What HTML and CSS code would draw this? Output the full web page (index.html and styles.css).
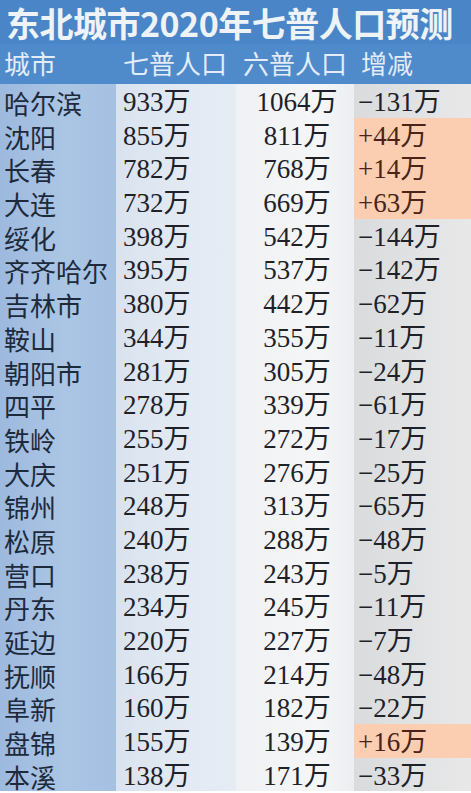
FILE: index.html
```html
<!DOCTYPE html>
<html lang="zh-CN">
<head>
<meta charset="utf-8">
<link rel="stylesheet" href="styles.css">
</head>
<body>
<div class="sheet">
  <div class="title">东北城市2020年七普人口预测</div>
  <div class="row head">
    <div class="c city">城市</div>
    <div class="c">七普人口</div>
    <div class="c">六普人口</div>
    <div class="c">增减</div>
  </div>
  <div class="body">
    <div class="col col-city">
      <div class="cell">哈尔滨</div><div class="cell">沈阳</div><div class="cell">长春</div><div class="cell">大连</div><div class="cell">绥化</div><div class="cell">齐齐哈尔</div><div class="cell">吉林市</div><div class="cell">鞍山</div><div class="cell">朝阳市</div><div class="cell">四平</div><div class="cell">铁岭</div><div class="cell">大庆</div><div class="cell">锦州</div><div class="cell">松原</div><div class="cell">营口</div><div class="cell">丹东</div><div class="cell">延边</div><div class="cell">抚顺</div><div class="cell">阜新</div><div class="cell">盘锦</div><div class="cell">本溪</div>
    </div>
    <div class="col col-7 num">
      <div class="cell">933万</div><div class="cell">855万</div><div class="cell">782万</div><div class="cell">732万</div><div class="cell">398万</div><div class="cell">395万</div><div class="cell">380万</div><div class="cell">344万</div><div class="cell">281万</div><div class="cell">278万</div><div class="cell">255万</div><div class="cell">251万</div><div class="cell">248万</div><div class="cell">240万</div><div class="cell">238万</div><div class="cell">234万</div><div class="cell">220万</div><div class="cell">166万</div><div class="cell">160万</div><div class="cell">155万</div><div class="cell">138万</div>
    </div>
    <div class="col col-6 num">
      <div class="cell">1064万</div><div class="cell">811万</div><div class="cell">768万</div><div class="cell">669万</div><div class="cell">542万</div><div class="cell">537万</div><div class="cell">442万</div><div class="cell">355万</div><div class="cell">305万</div><div class="cell">339万</div><div class="cell">272万</div><div class="cell">276万</div><div class="cell">313万</div><div class="cell">288万</div><div class="cell">243万</div><div class="cell">245万</div><div class="cell">227万</div><div class="cell">214万</div><div class="cell">182万</div><div class="cell">139万</div><div class="cell">171万</div>
    </div>
    <div class="col col-d num">
      <div class="cell">−131万</div><div class="cell up">+44万</div><div class="cell up">+14万</div><div class="cell up">+63万</div><div class="cell">−144万</div><div class="cell">−142万</div><div class="cell">−62万</div><div class="cell">−11万</div><div class="cell">−24万</div><div class="cell">−61万</div><div class="cell">−17万</div><div class="cell">−25万</div><div class="cell">−65万</div><div class="cell">−48万</div><div class="cell">−5万</div><div class="cell">−11万</div><div class="cell">−7万</div><div class="cell">−48万</div><div class="cell">−22万</div><div class="cell up">+16万</div><div class="cell">−33万</div>
    </div>
  </div>
</div>
</body>
</html>
```

FILE: styles.css
```css
html, body {
  margin: 0;
  padding: 0;
  background: #ffffff;
}
.sheet {
  width: 471px;
  height: 793px;
  overflow: hidden;
  font-family: "Noto Sans CJK SC", sans-serif;
}
.title {
  height: 44px;
  box-sizing: border-box;
  padding-top: 1px;
  background: #4a86c7;
  color: #eef3f8;
  font-weight: 700;
  font-size: 34px;
  line-height: 43px;
  padding-left: 6px;
  letter-spacing: -0.5px;
  white-space: nowrap;
}
.row.head {
  display: grid;
  grid-template-columns: 116px 120px 118px 1fr;
  height: 40px;
  background: #4f8acb;
  color: #e3ecf7;
  font-size: 26px;
  line-height: 38px;
}
.head .c {
  padding-left: 7px;
  white-space: nowrap;
  height: 38px;
}
.head .c.city {
  padding-left: 4px;
}
.body {
  display: grid;
  grid-template-columns: 116px 120px 118px 1fr;
}
.col {
  display: flex;
  flex-direction: column;
}
.cell {
  box-sizing: border-box;
  height: 33.7px;
  padding-top: 4px;
  line-height: 29.7px;
  font-size: 26px;
  white-space: nowrap;
  color: #1e2228;
}
.col-city {
  background: linear-gradient(90deg, #9db9de 0%, #abc5e4 55%, #a6c0e2 100%);
}
.col-city .cell {
  padding-left: 4px;
  color: #1c2a3c;
}
.num .cell {
  font-family: "Liberation Serif", "Noto Sans CJK SC", serif;
  font-size: 27px;
}
.col-7 {
  background: linear-gradient(90deg, #d9e3ef 0%, #e3eaf3 60%, #e6ecf4 100%);
}
.col-7 .cell {
  padding-left: 7px;
}
.col-6 {
  background: linear-gradient(90deg, #eff1f4 0%, #f5f6f7 70%, #eceef1 100%);
}
.col-6 .cell {
  text-align: center;
  padding-left: 4px;
}
.col-d {
  background: linear-gradient(90deg, #dadbdd 0%, #e2e3e4 60%, #e8e8e9 100%);
}
.col-d .cell {
  padding-left: 4px;
}
.col-d .cell.up {
  background: #fcceb1;
  color: #4a2418;
}
```
